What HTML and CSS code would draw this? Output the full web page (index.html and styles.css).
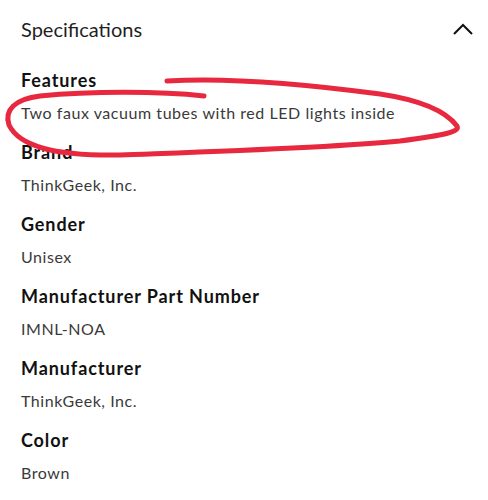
FILE: index.html
```html
<!DOCTYPE html>
<html>
<head>
<meta charset="utf-8">
<link rel="stylesheet" href="styles.css">
</head>
<body>
<div class="page">
  <div class="header">
    <span class="title">Specifications</span>
    <svg class="chevron" width="20" height="12" viewBox="0 0 20 12"><path d="M1 11 L10 2 L19 11" fill="none" stroke="#111" stroke-width="2"/></svg>
  </div>
  <dl class="specs">
    <div class="spec"><dt>Features</dt><dd>Two faux vacuum tubes with red LED lights inside</dd></div>
    <div class="spec"><dt>Brand</dt><dd>ThinkGeek, Inc.</dd></div>
    <div class="spec"><dt>Gender</dt><dd>Unisex</dd></div>
    <div class="spec"><dt>Manufacturer Part Number</dt><dd>IMNL-NOA</dd></div>
    <div class="spec"><dt>Manufacturer</dt><dd>ThinkGeek, Inc.</dd></div>
    <div class="spec"><dt>Color</dt><dd>Brown</dd></div>
  </dl>
  <svg class="scribble" width="488" height="500" viewBox="0 0 488 500">
    <path d="M167,81 C230,77 320,86 380,94 C420,100 445,110 457,126 C460,132 445,135 400,141 C330,148 200,152 120,155 C60,156 20,148 9,125 C4,110 15,99 40,96 C90,91 160,91 204,96" fill="none" stroke="#e8283f" stroke-width="5" stroke-linecap="round" stroke-linejoin="round"/>
  </svg>
</div>
</body>
</html>
```
FILE: styles.css
```css
* { box-sizing: border-box; }
html, body { margin: 0; padding: 0; background: #fff; }
body { font-family: Lato, "Open Sans", sans-serif; color: #2e2f32; }
.page { position: relative; width: 488px; height: 500px; overflow: hidden; padding: 0 21px; }
.header { display: flex; justify-content: space-between; align-items: center; padding-top: 15px; height: 43px; }
.title { font-size: 20px; line-height: 28px; color: #1f1f1f; }
.chevron { display: block; margin-right: -6px; }
.specs { margin: 25px 0 0; padding: 0; }
.spec { margin-bottom: 15px; }
.spec dt { font-size: 18px; line-height: 24px; font-weight: 700; color: #111; letter-spacing: 0.9px; }
.spec dd { margin: 9px 0 0; font-size: 16px; line-height: 24px; color: #3a3a3a; letter-spacing: 0.55px; }
.scribble { position: absolute; left: 0; top: 0; pointer-events: none; }
```
